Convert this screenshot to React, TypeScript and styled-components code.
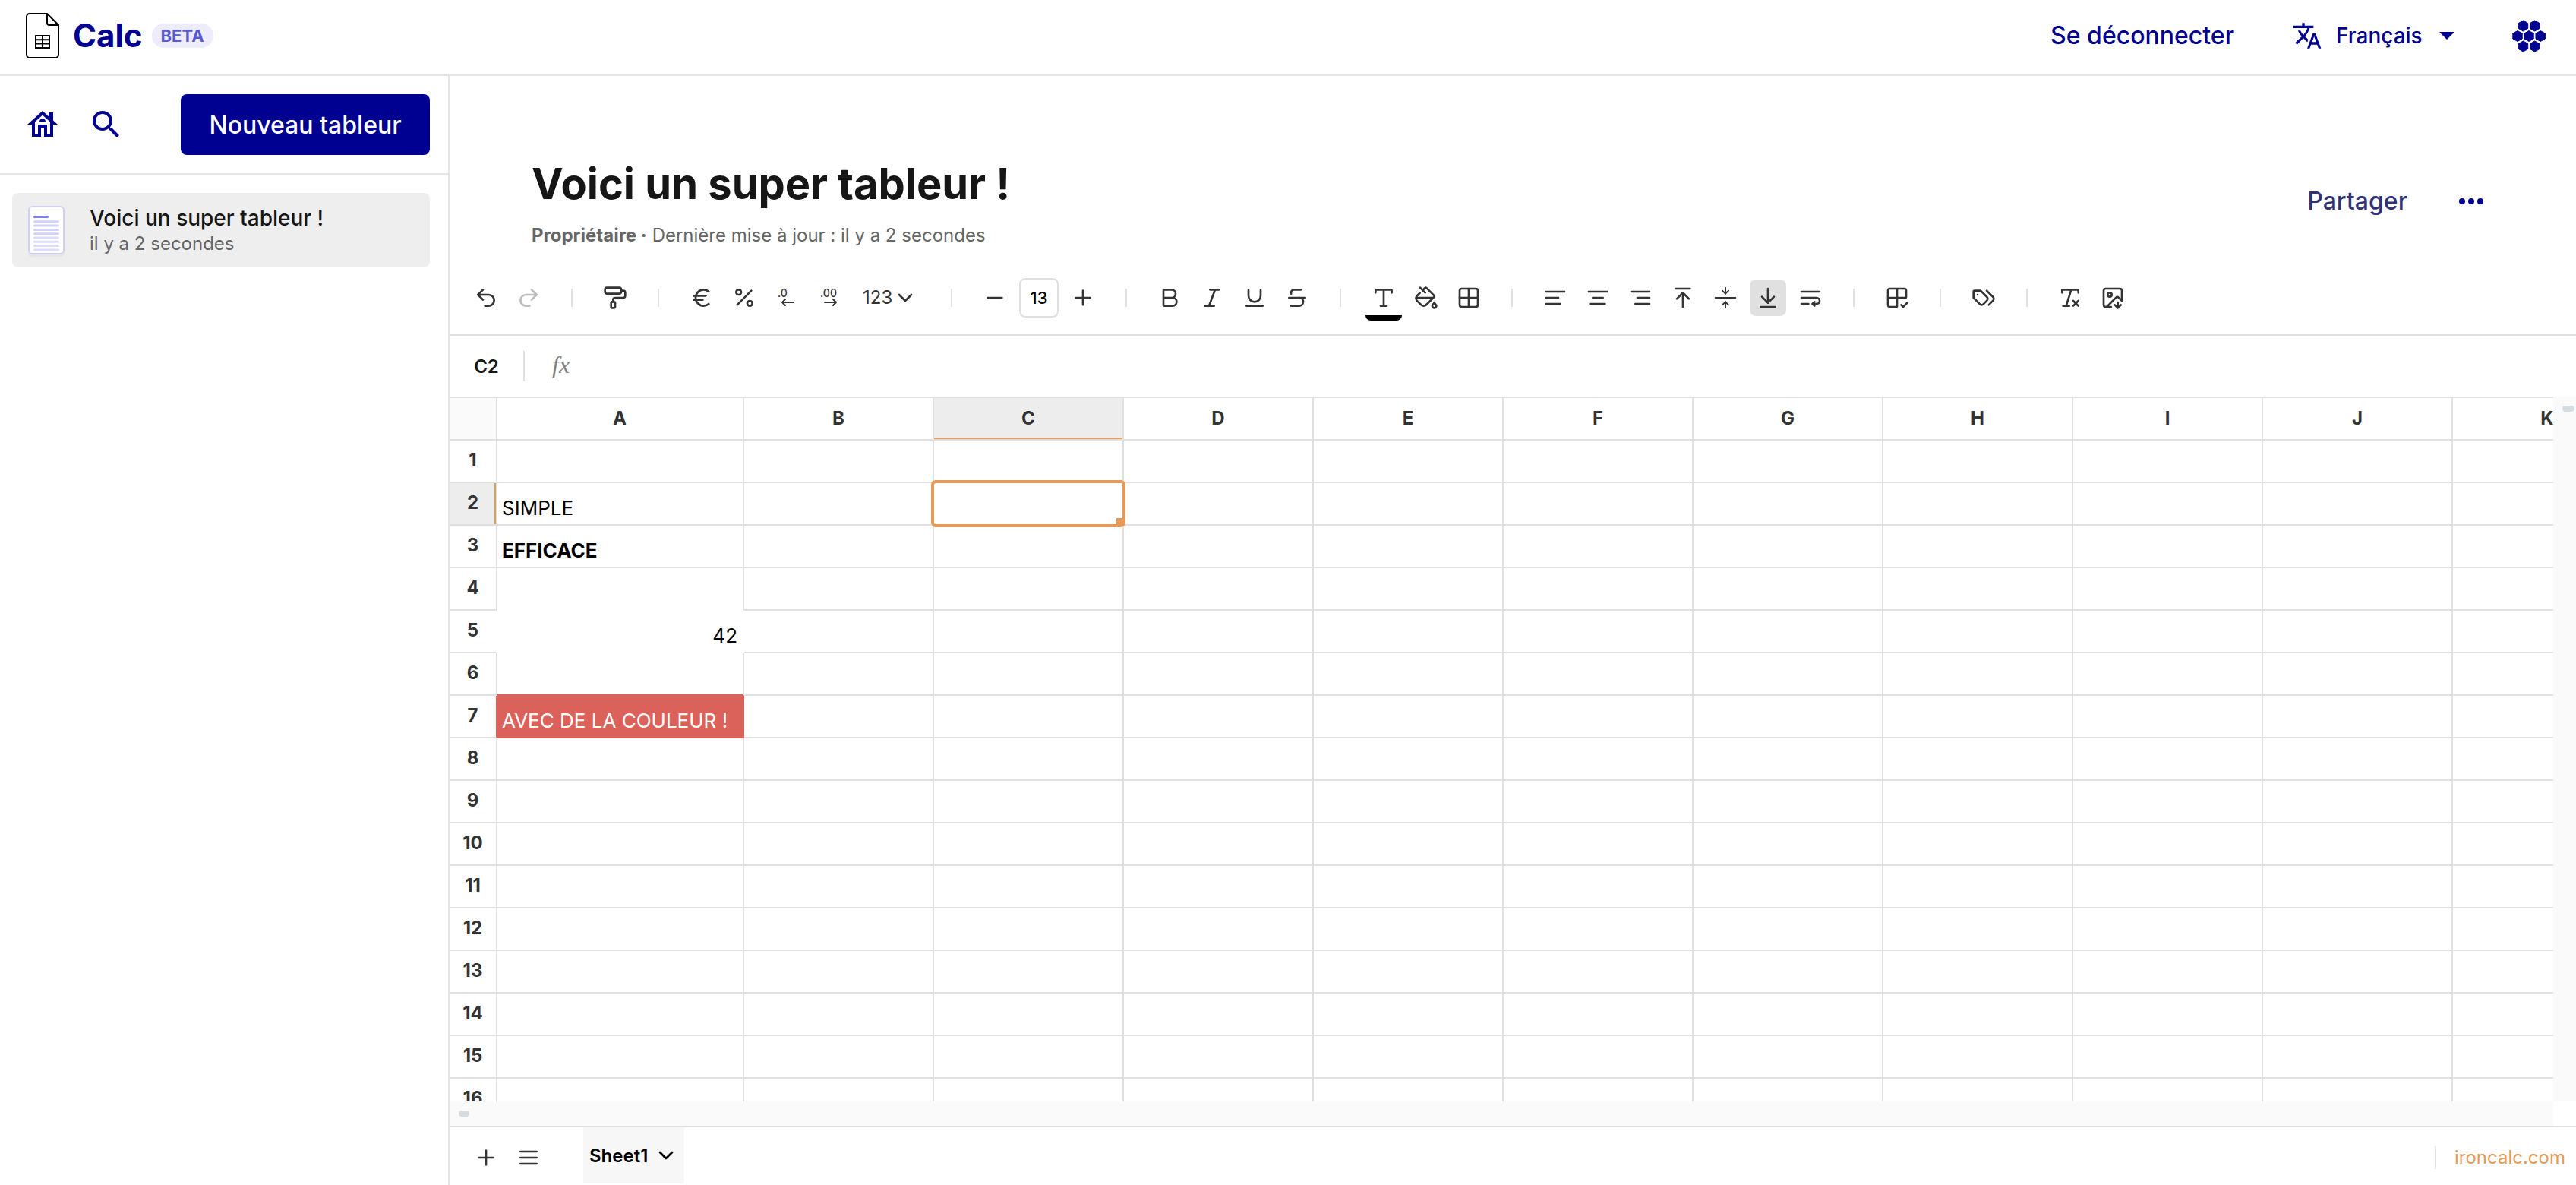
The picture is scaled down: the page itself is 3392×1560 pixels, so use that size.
import React, { ReactNode } from 'react';
import styled, { createGlobalStyle } from 'styled-components';
import {
  ArrowDownToLine, ArrowUpToLine, Bold, ChevronDown, Euro, Grid2x2, Grid2x2Check, ImageDown,
  Italic, Minus, PaintBucket, PaintRoller, Percent, Plus, Redo2, RemoveFormatting,
  Strikethrough, Type, Underline, Undo2,
} from 'lucide-react';
import { MdOutlineHouse, MdSearch, MdTranslate } from 'react-icons/md';

const color = {
  brand: '#000091',
  line: '#e5e5e5',
  gridLine: '#e0e0e0',
  ink: '#161616',
  muted: '#666666',
  tool: '#333333',
  accent: '#e59b57',
  track: '#fafafa',
  active: '#ededed',
  red: '#db625b',
};

const GlobalStyle = createGlobalStyle`
  *, *::before, *::after { box-sizing: border-box; }
  body {
    margin: 0;
    background: #ffffff;
    color: ${color.ink};
    font-family: Inter, "Liberation Sans", sans-serif;
    font-size: 24px;
  }
  button, input, select { font: inherit; color: inherit; }
  svg { display: block; flex: none; }
`;

/* ---------- shell ---------- */

const Page = styled.div`
  display: flex;
  flex-direction: column;
  height: 100vh;
  overflow: hidden;
`;

const Header = styled.header`
  display: flex;
  align-items: center;
  justify-content: space-between;
  flex: none;
  height: 100px;
  padding: 0 40px 4px 32px;
  border-bottom: 2px solid ${color.line};
  color: ${color.brand};
`;

const Brand = styled.a`
  display: flex;
  align-items: center;
  gap: 12px;
  color: inherit;
  text-decoration: none;
`;

const BrandName = styled.span`
  font-size: 42px;
  line-height: 48px;
  font-weight: 700;
`;

const Badge = styled.span`
  padding: 0 12px;
  border-radius: 16px;
  background: #ececfc;
  color: #5958d3;
  font-size: 22px;
  line-height: 32px;
  font-weight: 700;
`;

const HeaderActions = styled.div`
  display: flex;
  align-items: center;
  gap: 76px;
`;

const TextButton = styled.button`
  padding: 0;
  border: 0;
  background: none;
  font-size: 32px;
  line-height: 40px;
  font-weight: 500;
`;

const LanguagePicker = styled.label`
  display: flex;
  align-items: center;
  gap: 18px;
`;

const PlainSelect = styled.select`
  appearance: none;
  padding: 0;
  border: 0;
  background: none;
  font-weight: inherit;
`;

const LanguageSelect = styled(PlainSelect)`
  font-size: 28px;
  line-height: 40px;
  font-weight: 500;
`;

const IconButton = styled.button<{ $active?: boolean; $muted?: boolean }>`
  display: flex;
  align-items: center;
  justify-content: center;
  flex: none;
  width: 48px;
  height: 48px;
  padding: 0;
  border: 0;
  border-radius: 8px;
  background: ${(p) => (p.$active ? '#e0e0e0' : 'none')};
  color: ${(p) => (p.$muted ? '#bdbdbd' : 'inherit')};
`;

const Body = styled.div`
  display: flex;
  flex: 1;
  min-height: 0;
`;

/* ---------- sidebar ---------- */

const Sidebar = styled.aside`
  flex: none;
  width: 592px;
  border-right: 2px solid ${color.line};
`;

const SidebarTop = styled.div`
  display: flex;
  align-items: center;
  gap: 36px;
  height: 130px;
  padding: 0 24px 0 32px;
  border-bottom: 2px solid ${color.line};
  color: ${color.brand};
`;

const PrimaryButton = styled.button`
  min-width: 328px;
  height: 80px;
  margin-left: auto;
  padding: 0 32px;
  border: 0;
  border-radius: 8px;
  background: ${color.brand};
  color: #ffffff;
  font-size: 32px;
  font-weight: 500;
`;

const DocumentList = styled.nav`
  padding: 24px 24px 24px 16px;
`;

const DocumentLink = styled.a`
  display: flex;
  align-items: center;
  gap: 28px;
  height: 98px;
  padding: 0 18px;
  border-radius: 8px;
  background: #eeeeee;
  color: inherit;
  text-decoration: none;
`;

const DocumentTitle = styled.div`
  font-size: 28px;
  line-height: 36px;
  font-weight: 500;
`;

const DocumentDate = styled.div`
  color: ${color.muted};
  font-size: 24px;
  line-height: 32px;
`;

/* ---------- document header ---------- */

const Main = styled.main`
  display: flex;
  flex-direction: column;
  flex: 1;
  min-width: 0;
`;

const DocumentHeader = styled.div`
  display: flex;
  align-items: center;
  justify-content: space-between;
  padding: 104px 114px 18px 108px;
`;

const Title = styled.h1`
  margin: 0 0 14px;
  font-size: 56px;
  line-height: 76px;
  font-weight: 700;
`;

const Meta = styled.p`
  margin: 0;
  color: ${color.muted};
  font-size: 24px;
  line-height: 32px;
`;

const DocumentActions = styled.div`
  display: flex;
  align-items: center;
  gap: 60px;
  color: ${color.brand};
`;

const ShareButton = styled(TextButton)`
  color: #313178;
`;

/* ---------- toolbar ---------- */

const Toolbar = styled.div`
  display: flex;
  align-items: center;
  gap: 32px;
  flex: none;
  height: 98px;
  padding: 0 24px;
  border-bottom: 2px solid ${color.gridLine};
  color: ${color.tool};
`;

const ToolGroup = styled.div`
  display: flex;
  align-items: center;
  gap: 8px;
`;

const Divider = styled.span<{ $height: number }>`
  flex: none;
  width: 2px;
  height: ${(p) => p.$height}px;
  background: ${color.gridLine};
`;

const FormatPicker = styled.label`
  display: flex;
  align-items: center;
  width: 96px;
  padding: 0 12px;
`;

const FormatSelect = styled(PlainSelect)`
  width: 40px;
  overflow: visible;
  font-size: 24px;
  line-height: 32px;
`;

const SizeInput = styled.input`
  width: 52px;
  height: 52px;
  padding: 0;
  border: 2px solid ${color.gridLine};
  border-radius: 8px;
  color: #000000;
  font-size: 22px;
  font-weight: 500;
  text-align: center;
`;

const ColorButton = styled(IconButton)`
  position: relative;

  &::after {
    content: "";
    position: absolute;
    right: 0;
    bottom: -6px;
    left: 0;
    height: 7px;
    border-radius: 0 0 8px 8px;
    background: #000000;
  }
`;

/* ---------- formula bar ---------- */

const FormulaBar = styled.div`
  display: flex;
  align-items: center;
  flex: none;
  height: 80px;
`;

const CellName = styled.div`
  width: 97px;
  font-size: 24px;
  font-weight: 600;
  text-align: center;
`;

const FunctionLabel = styled.label`
  padding: 0 16px 4px 36px;
  color: #828282;
  font-family: "Liberation Serif", serif;
  font-size: 32px;
  line-height: 36px;
  font-style: italic;
`;

const FormulaInput = styled.input`
  flex: 1;
  height: 48px;
  padding: 0;
  border: 0;
  outline: 0;
`;

/* ---------- sheet ---------- */

const Workspace = styled.div`
  display: grid;
  grid-template-rows: minmax(0, 1fr) 32px;
  grid-template-columns: minmax(0, 1fr) 30px;
  flex: 1;
  min-height: 0;
`;

const SheetView = styled.div`
  overflow: hidden;
`;

const Track = styled.div<{ $vertical?: boolean }>`
  padding: 12px;
  background: ${color.track};

  &::before {
    content: "";
    display: block;
    width: ${(p) => (p.$vertical ? 16 : 14)}px;
    height: 8px;
    border-radius: 4px;
    background: #d6dde0;
  }
`;

const Sheet = styled.table`
  width: 2888px;
  border-top: 2px solid ${color.gridLine};
  border-collapse: separate;
  border-spacing: 0;
  table-layout: fixed;
`;

const HeadColumn = styled.col`
  width: 62px;
`;

const Column = styled.col<{ $wide?: boolean }>`
  width: ${(p) => (p.$wide ? 326 : 250)}px;
`;

const Corner = styled.td`
  height: 56px;
  padding: 0;
  border-right: 1px solid ${color.gridLine};
  border-bottom: 2px solid ${color.gridLine};
  background: ${color.track};
`;

const ColumnHead = styled.th<{ $active: boolean }>`
  height: 56px;
  padding: 0;
  border-right: 2px solid ${color.gridLine};
  border-bottom: 2px solid ${color.gridLine};
  background: ${(p) => (p.$active ? color.active : '#ffffff')};
  box-shadow: ${(p) => (p.$active ? `inset 0 -2px ${color.accent}` : 'none')};
  color: ${color.tool};
  font-size: 24px;
  line-height: 32px;
  font-weight: 700;
`;

const RowHead = styled.th<{ $active: boolean; $edge?: string }>`
  height: 56px;
  padding: 0 0 2px;
  border-right: 1px solid ${(p) => p.$edge ?? color.gridLine};
  border-bottom: 2px solid ${color.gridLine};
  background: ${(p) => (p.$active ? color.active : '#ffffff')};
  box-shadow: ${(p) => (p.$active ? `inset -2px 0 ${color.accent}` : 'none')};
  color: ${color.tool};
  font-size: 24px;
  line-height: 32px;
  font-weight: 700;
`;

interface CellStyle {
  fill?: string;
  ink?: string;
  bold?: boolean;
  right?: boolean;
  edgeRight?: string;
  edgeBottom?: string;
}

const Cell = styled.td<{ $s: CellStyle }>`
  position: relative;
  height: 56px;
  padding: 0 7px 5px;
  border-right: 2px solid ${(p) => p.$s.edgeRight ?? color.gridLine};
  border-bottom: 2px solid ${(p) => p.$s.edgeBottom ?? color.gridLine};
  background: ${(p) => p.$s.fill ?? 'none'};
  color: ${(p) => p.$s.ink ?? '#000000'};
  font-size: 26px;
  line-height: 32px;
  font-weight: ${(p) => (p.$s.bold ? 700 : 400)};
  text-align: ${(p) => (p.$s.right ? 'right' : 'left')};
  vertical-align: bottom;
  white-space: nowrap;
`;

const Selection = styled.div`
  position: absolute;
  inset: -4px;
  z-index: 1;
  border: 4px solid ${color.accent};
  border-radius: 6px;

  &::after {
    content: "";
    position: absolute;
    right: 0;
    bottom: 0;
    width: 8px;
    height: 8px;
    background: ${color.accent};
  }
`;

/* ---------- footer ---------- */

const Footer = styled.footer`
  display: flex;
  align-items: center;
  flex: none;
  height: 78px;
  padding: 0 14px 0 24px;
  border-top: 2px solid ${color.gridLine};
  color: ${color.tool};
`;

const FooterTools = styled(ToolGroup)`
  padding-top: 4px;
`;

const SheetTab = styled.button`
  display: flex;
  align-items: center;
  align-self: flex-start;
  gap: 8px;
  height: 74px;
  margin-left: 48px;
  padding: 0 8px;
  border: 0;
  background: #f7f7f7;
  color: #000000;
  font-size: 24px;
  font-weight: 600;
`;

const Credit = styled.div`
  display: flex;
  align-items: center;
  gap: 24px;
  margin-left: auto;
  padding-top: 4px;
`;

const CreditLink = styled.a`
  color: ${color.accent};
  font-size: 24px;
  line-height: 32px;
  text-decoration: none;
`;

/* ---------- drawings ---------- */

const Strokes = ({ paths, width = 2 }: { paths: string[]; width?: number }) => (
  <svg width="32" height="32" viewBox="0 0 24 24" fill="none" stroke="currentColor"
    strokeWidth={width} strokeLinecap="round" strokeLinejoin="round" aria-hidden="true">
    {paths.map((d) => <path key={d} d={d} />)}
  </svg>
);

const icons = {
  menu: ['M4 6h16', 'M4 12h16', 'M4 18h16'],
  alignLeft: ['M21 6H3', 'M15 12H3', 'M17 18H3'],
  alignCenter: ['M21 6H3', 'M17 12H7', 'M19 18H5'],
  alignRight: ['M21 6H3', 'M21 12H9', 'M21 18H7'],
  alignMiddle: ['M12 22v-6', 'M12 8V2', 'M2 12h20', 'm15 19-3-3-3 3', 'm15 5-3 3-3-3'],
  wrap: ['M3 6h18', 'M3 12h15a3 3 0 1 1 0 6h-4', 'm16 16-2 2 2 2', 'M3 18h7'],
  tags: [
    'M9 5H3a1 1 0 0 0-1 1v6l6.29 6.29c.94.94 2.48.94 3.42 0l3.58-3.58c.94-.94.94-2.48 0-3.42L9 5Z',
    'M6 9.01V9',
    'm15 5 6.3 6.3a2.4 2.4 0 0 1 0 3.4L17 19',
  ],
};

const DecimalIcon = ({ digits, head, x }: { digits: string; head: string; x: number }) => (
  <svg width="32" height="32" viewBox="0 0 32 32" fill="none" aria-hidden="true">
    <text x={x} y="15" fill="currentColor" fontSize="14" fontWeight="500">{digits}</text>
    <path d={`M10 22h15${head}`} stroke="currentColor" strokeWidth="2" strokeLinecap="round" strokeLinejoin="round" />
  </svg>
);

const LogoIcon = () => (
  <svg width="52" height="64" viewBox="0 0 52 64" fill="none" stroke="#000000" strokeWidth="2" aria-hidden="true">
    <path d="M30 3H7a4 4 0 0 0-4 4v50a4 4 0 0 0 4 4h34a4 4 0 0 0 4-4V18L30 3v12a3 3 0 0 0 3 3h12" strokeLinejoin="round" />
    <path d="M15 32h18v16H15zM15 37.3h18M15 42.6h18M24 32v16" />
  </svg>
);

const HEXES = [[14.5, 8], [29.7, 8], [7, 21.5], [22, 21.5], [37.2, 21.5], [14.5, 35], [29.7, 35]];

const HexIcon = () => (
  <svg width="44" height="43" viewBox="0 0 44 43" fill="currentColor" stroke="currentColor" strokeLinejoin="round" aria-hidden="true">
    {HEXES.map(([x, y]) => (
      <path key={`${x}-${y}`} d={`M${x} ${y - 7}l6.2 3.5v7l-6.2 3.5l-6.2 -3.5v-7z`} />
    ))}
  </svg>
);

const DocumentIcon = () => (
  <svg width="56" height="72" viewBox="0 0 56 72" aria-hidden="true">
    <rect x="3" y="6" width="48" height="65" rx="5" fill="#e6e6e9" />
    <rect x="4" y="5" width="46" height="62" rx="5" fill="#ffffff" stroke="#cfcff8" strokeWidth="2" />
    <rect x="10" y="17" width="20" height="3" rx="1.5" fill="#7f7fee" />
    {[0, 1, 2, 3, 4, 5, 6, 7].map((i) => (
      <rect key={i} x="10" y={23.3 + i * 5.3} width="34" height="3" rx="1.5" fill={i < 4 ? '#d1d1f9' : '#dcdcfb'} />
    ))}
  </svg>
);

/* ---------- data ---------- */

const COLUMNS = 'ABCDEFGHIJK'.split('');
const ROWS = Array.from({ length: 16 }, (_, i) => i + 1);
const SELECTED = { column: 'C', row: 2 };

const cells: Record<string, { value?: string; style: CellStyle }> = {
  A2: { value: 'SIMPLE', style: {} },
  A3: { value: 'EFFICACE', style: { bold: true } },
  A4: { style: { edgeBottom: '#ffffff' } },
  A5: { value: '42', style: { right: true, edgeRight: '#ffffff', edgeBottom: '#ffffff' } },
  A6: { style: { edgeBottom: color.red } },
  A7: { value: 'AVEC DE LA COULEUR !', style: { fill: color.red, ink: '#ffffff', edgeRight: color.red, edgeBottom: color.red } },
};

const rowEdges: Record<number, string> = { 5: '#ffffff', 7: color.red };

const Tool = ({ label, active, muted, children }: { label: string; active?: boolean; muted?: boolean; children: ReactNode }) => (
  <IconButton type="button" aria-label={label} $active={active} $muted={muted}>{children}</IconButton>
);

const Separator = () => <Divider $height={24} />;

export default function App() {
  return (
    <Page>
      <GlobalStyle />
      <Header>
        <Brand href="#">
          <LogoIcon />
          <BrandName>Calc</BrandName>
          <Badge>BETA</Badge>
        </Brand>
        <HeaderActions>
          <TextButton type="button">Se déconnecter</TextButton>
          <LanguagePicker>
            <MdTranslate size={40} />
            <LanguageSelect aria-label="Langue" defaultValue="fr">
              <option value="fr">Français</option>
            </LanguageSelect>
            <svg width="24" height="10" viewBox="0 0 24 10" fill="currentColor" aria-hidden="true">
              <path d="M4 0h20L14 10z" />
            </svg>
          </LanguagePicker>
          <TextButton type="button" aria-label="Services"><HexIcon /></TextButton>
        </HeaderActions>
      </Header>

      <Body>
        <Sidebar>
          <SidebarTop>
            <Tool label="Accueil"><MdOutlineHouse size={48} /></Tool>
            <Tool label="Rechercher"><MdSearch size={48} /></Tool>
            <PrimaryButton type="button">Nouveau tableur</PrimaryButton>
          </SidebarTop>
          <DocumentList>
            <DocumentLink href="#">
              <DocumentIcon />
              <div>
                <DocumentTitle>Voici un super tableur !</DocumentTitle>
                <DocumentDate>il y a 2 secondes</DocumentDate>
              </div>
            </DocumentLink>
          </DocumentList>
        </Sidebar>

        <Main>
          <DocumentHeader>
            <div>
              <Title>Voici un super tableur !</Title>
              <Meta><strong>Propriétaire ·</strong> Dernière mise à jour : il y a 2 secondes</Meta>
            </div>
            <DocumentActions>
              <ShareButton type="button">Partager</ShareButton>
              <Tool label="Options">
                <svg width="34" height="10" viewBox="0 0 34 10" fill="currentColor" aria-hidden="true">
                  <circle cx="5" cy="5" r="4" /><circle cx="17" cy="5" r="4" /><circle cx="29" cy="5" r="4" />
                </svg>
              </Tool>
            </DocumentActions>
          </DocumentHeader>

          <Toolbar role="toolbar">
            <ToolGroup>
              <Tool label="Annuler"><Undo2 size={32} /></Tool>
              <Tool label="Rétablir" muted><Redo2 size={32} /></Tool>
            </ToolGroup>
            <Separator />
            <Tool label="Copier le style"><PaintRoller size={32} /></Tool>
            <Separator />
            <ToolGroup>
              <Tool label="Format euro"><Euro size={32} /></Tool>
              <Tool label="Format pourcentage"><Percent size={32} /></Tool>
              <Tool label="Moins de décimales"><DecimalIcon digits=".0" x={4} head="M14 18l-4 4l4 4" /></Tool>
              <Tool label="Plus de décimales"><DecimalIcon digits=".00" x={4} head="M21 18l4 4l-4 4" /></Tool>
              <FormatPicker>
                <FormatSelect aria-label="Format de nombre" defaultValue="123">
                  <option>123</option>
                </FormatSelect>
                <ChevronDown size={32} />
              </FormatPicker>
            </ToolGroup>
            <Separator />
            <ToolGroup>
              <Tool label="Réduire la taille"><Minus size={32} /></Tool>
              <SizeInput aria-label="Taille de police" defaultValue="13" />
              <Tool label="Augmenter la taille"><Plus size={32} /></Tool>
            </ToolGroup>
            <Separator />
            <ToolGroup>
              <Tool label="Gras"><Bold size={32} /></Tool>
              <Tool label="Italique"><Italic size={32} /></Tool>
              <Tool label="Souligné"><Underline size={32} /></Tool>
              <Tool label="Barré"><Strikethrough size={32} /></Tool>
            </ToolGroup>
            <Separator />
            <ToolGroup>
              <ColorButton type="button" aria-label="Couleur du texte"><Type size={32} /></ColorButton>
              <Tool label="Couleur de fond"><PaintBucket size={32} /></Tool>
              <Tool label="Bordures"><Grid2x2 size={32} /></Tool>
            </ToolGroup>
            <Separator />
            <ToolGroup>
              <Tool label="Aligner à gauche"><Strokes paths={icons.alignLeft} /></Tool>
              <Tool label="Centrer"><Strokes paths={icons.alignCenter} /></Tool>
              <Tool label="Aligner à droite"><Strokes paths={icons.alignRight} /></Tool>
              <Tool label="Aligner en haut"><ArrowUpToLine size={32} /></Tool>
              <Tool label="Aligner au milieu"><Strokes paths={icons.alignMiddle} width={1.5} /></Tool>
              <Tool label="Aligner en bas" active><ArrowDownToLine size={32} /></Tool>
              <Tool label="Retour à la ligne"><Strokes paths={icons.wrap} /></Tool>
            </ToolGroup>
            <Separator />
            <Tool label="Quadrillage"><Grid2x2Check size={32} /></Tool>
            <Separator />
            <Tool label="Plages nommées"><Strokes paths={icons.tags} /></Tool>
            <Separator />
            <ToolGroup>
              <Tool label="Effacer la mise en forme"><RemoveFormatting size={32} /></Tool>
              <Tool label="Exporter en image"><ImageDown size={32} /></Tool>
            </ToolGroup>
          </Toolbar>

          <FormulaBar>
            <CellName>C2</CellName>
            <Divider $height={40} />
            <FunctionLabel htmlFor="formula">fx</FunctionLabel>
            <FormulaInput id="formula" />
          </FormulaBar>

          <Workspace>
            <SheetView>
              <Sheet>
                <colgroup>
                  <HeadColumn />
                  {COLUMNS.map((c) => <Column key={c} $wide={c === 'A'} />)}
                </colgroup>
                <thead>
                  <tr>
                    <Corner />
                    {COLUMNS.map((c) => (
                      <ColumnHead key={c} scope="col" $active={c === SELECTED.column}>{c}</ColumnHead>
                    ))}
                  </tr>
                </thead>
                <tbody>
                  {ROWS.map((r) => (
                    <tr key={r}>
                      <RowHead scope="row" $active={r === SELECTED.row} $edge={rowEdges[r]}>{r}</RowHead>
                      {COLUMNS.map((c) => {
                        const cell = cells[`${c}${r}`];
                        return (
                          <Cell key={c} $s={cell?.style ?? {}}>
                            {cell?.value}
                            {c === SELECTED.column && r === SELECTED.row && <Selection />}
                          </Cell>
                        );
                      })}
                    </tr>
                  ))}
                </tbody>
              </Sheet>
            </SheetView>
            <Track $vertical />
            <Track />
          </Workspace>

          <Footer>
            <FooterTools>
              <Tool label="Ajouter une feuille"><Plus size={32} /></Tool>
              <Tool label="Liste des feuilles"><Strokes paths={icons.menu} /></Tool>
            </FooterTools>
            <SheetTab type="button">Sheet1<ChevronDown size={32} /></SheetTab>
            <Credit>
              <Divider $height={30} />
              <CreditLink href="#">ironcalc.com</CreditLink>
            </Credit>
          </Footer>
        </Main>
      </Body>
    </Page>
  );
}
